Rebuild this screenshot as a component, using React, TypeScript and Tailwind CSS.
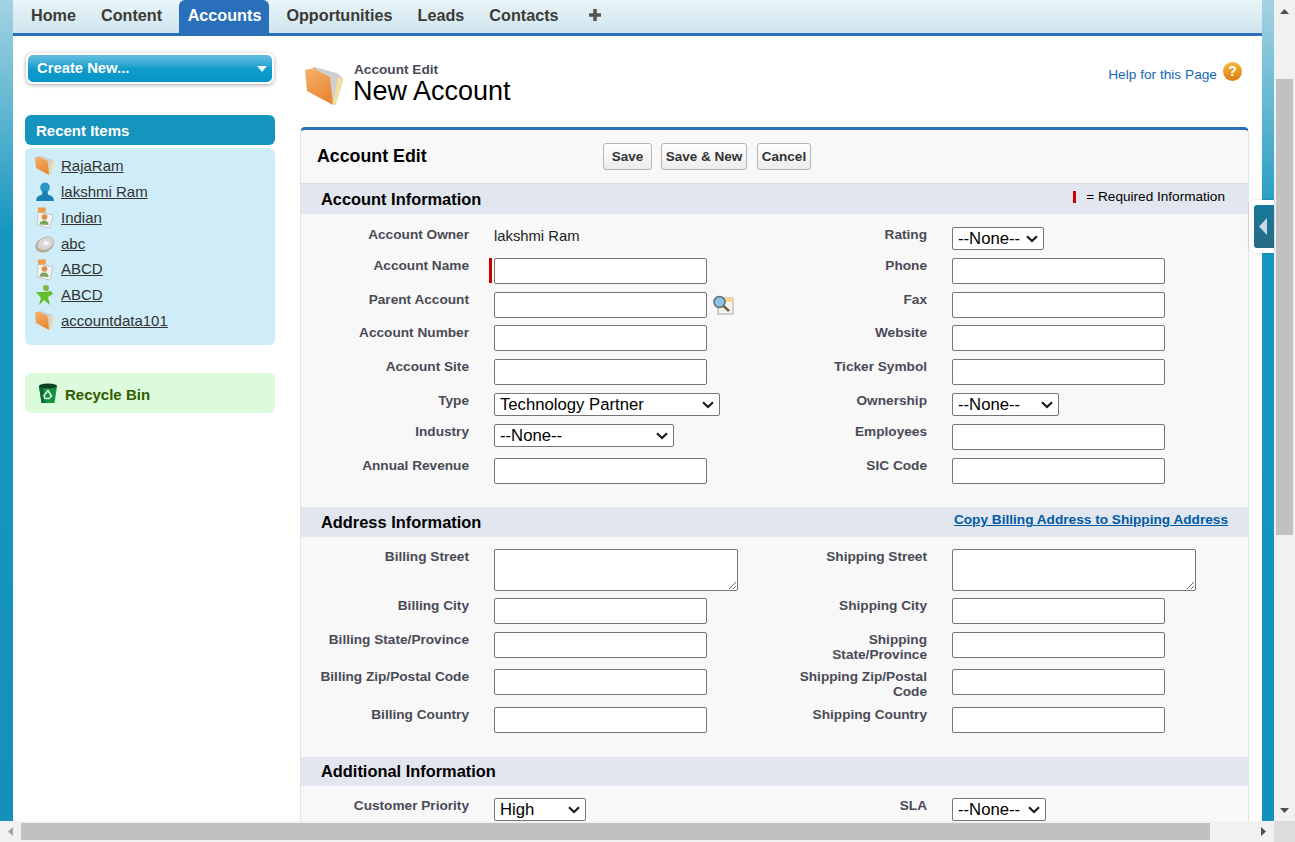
import { ReactNode } from 'react'

const tabs = ['Home', 'Content', 'Accounts', 'Opportunities', 'Leads', 'Contacts']

function FolderIcon({ className }: { className: string }) {
  return (
    <svg viewBox="0 0 40 40" className={className}>
      <defs>
        <linearGradient id="folderFront" x1="0" y1="0" x2="0.4" y2="1">
          <stop offset="0" stopColor="#f6b26a" />
          <stop offset="1" stopColor="#ea8737" />
        </linearGradient>
      </defs>
      <path d="M8 0 L33 7 L38 12 L30 38 Z" fill="#cfcfcf" stroke="#bdbdbd" strokeWidth="0.6" />
      <path d="M33 10 L38 12 L30 38 L28 37 Z" fill="#f6df95" />
      <path d="M0 3 L9 1 L13 4 L25 10 L28 38 L2 24 Z" fill="url(#folderFront)" />
    </svg>
  )
}

function PersonIcon() {
  return (
    <svg viewBox="0 0 20 20" className="h-5 w-5">
      <ellipse cx="10" cy="5.5" rx="4.8" ry="5" fill="#2a95c6" />
      <path d="M7.5 9 H12.5 L13 12.5 C17 13.5 19 15.5 19 19 H1 C1 15.5 3 13.5 7 12.5 Z" fill="#1d80b2" />
    </svg>
  )
}

function CardIcon() {
  return (
    <svg viewBox="0 0 20 22" className="h-[22px] w-5">
      <path d="M3 5 L18 8 L15 21 L2 18 Z" fill="#f3f3ef" stroke="#bcbcbc" strokeWidth="0.8" />
      <path d="M3 0.5 H11 L10.5 5.5 H3 Z" fill="#ef9a4c" />
      <circle cx="9.5" cy="10" r="2.8" fill="#e08d4d" />
      <path d="M4.5 17.5 C4.5 12 14 12 13.5 18 Z" fill="#78a65c" />
    </svg>
  )
}

function CoinIcon() {
  return (
    <svg viewBox="0 0 22 20" className="h-5 w-[21px]">
      <ellipse cx="10" cy="11" rx="10" ry="7.5" transform="rotate(-25 10 11)" fill="#b8a98f" />
      <ellipse cx="11" cy="9.5" rx="9" ry="6.5" transform="rotate(-25 11 9.5)" fill="#d6d6d6" stroke="#a4a4a4" strokeWidth="0.6" />
      <path d="M8 9 L12 5.5 L12 8 L16 8 L14.5 10.5 L10.5 11.5 Z" fill="#f3f3f3" />
    </svg>
  )
}

function StarFigureIcon() {
  return (
    <svg viewBox="0 0 20 21" className="h-[21px] w-5">
      <circle cx="11" cy="3" r="3" fill="#8bb23f" />
      <path d="M1 7 L10 7 L16 6 L18 9 L13 12 L15 20 L9 15 L4 20 L6 13 Z" fill="#5fc02a" />
    </svg>
  )
}

function TrashIcon() {
  return (
    <svg viewBox="0 0 20 21" className="h-[21px] w-5">
      <path d="M1 3 H19 L16.5 20 H3.5 Z" fill="#15923f" />
      <path d="M3.5 20 H7 L5 3 H1 Z" fill="#0c6a30" />
      <ellipse cx="10" cy="3" rx="9" ry="2.4" fill="#0d3f20" />
      <path d="M10 7.5 L13.5 13 L11 15.5 H7 L6 12.5 Z" fill="none" stroke="#d4ecd9" strokeWidth="1.7" />
    </svg>
  )
}

function LookupIcon() {
  return (
    <svg viewBox="0 0 22 21" className="h-[21px] w-[22px]">
      <rect x="6" y="3" width="15" height="16" fill="#f4f3ee" stroke="#a8a8a0" />
      <rect x="12" y="3" width="9" height="4" fill="#fcd98a" />
      <circle cx="7.5" cy="7" r="5.5" fill="#8fc3e4" stroke="#5a6f80" strokeWidth="1.5" />
      <path d="M11.5 11 L17 16" stroke="#7a5a3a" strokeWidth="2.4" />
    </svg>
  )
}

function Field() {
  return <input className="block h-[26px] w-[213px] rounded-[2px] border border-[#767676] bg-white" />
}

function Area() {
  return <textarea className="block h-[42px] w-[244px] rounded-[2px] border border-[#767676] bg-white" />
}

function Pick({ value, className }: { value: string; className: string }) {
  return (
    <div className={`relative ${className}`}>
      <select
        defaultValue={value}
        className="block h-[23px] w-full appearance-none rounded-[2px] border border-[#767676] bg-white pt-[1px] pl-[5px] text-[16.7px] leading-none text-black"
      >
        <option>{value}</option>
      </select>
      <svg viewBox="0 0 12 8" className="pointer-events-none absolute top-[8px] right-[6px] h-2 w-3">
        <path d="M1 1.2 L6 6 L11 1.2" fill="none" stroke="#1a1a1a" strokeWidth="2.2" />
      </svg>
    </div>
  )
}

function Row({ height, label, field, label2, field2 }: { height: string; label: string; field: ReactNode; label2: string; field2: ReactNode }) {
  return (
    <div className={`flex ${height}`}>
      <div className="mr-[25px] w-[168px] text-right text-[13.65px] leading-[15px] font-bold text-[#4a4a56]">{label}</div>
      <div className="w-[265px]">{field}</div>
      <div className="mr-[25px] w-[168px] pl-[35px] text-right text-[13.65px] leading-[15px] font-bold text-[#4a4a56]">{label2}</div>
      <div>{field2}</div>
    </div>
  )
}

function SectionHead({ title, children }: { title: string; children?: ReactNode }) {
  return (
    <div className="flex h-full items-center justify-between bg-[#e2e6ef] pr-5 pl-5">
      <h3 className="text-[16.4px] font-bold text-black">{title}</h3>
      {children}
    </div>
  )
}

function ActionButton({ children, className }: { children: ReactNode; className: string }) {
  return (
    <button className={`h-[27px] rounded-[3px] border border-[#b5b5b5] bg-gradient-to-b from-white to-[#ececec] pt-[1px] text-[13.5px] font-bold text-[#333] ${className}`}>
      {children}
    </button>
  )
}

function RecentItem({ icon, name }: { icon: ReactNode; name: string }) {
  return (
    <li className="flex h-[25.8px] items-center">
      <span className="flex w-[26px] shrink-0 justify-center">{icon}</span>
      <span className="ml-[3px] text-[15px] text-[#333] underline">{name}</span>
    </li>
  )
}

export default function App() {
  return (
    <div className="flex h-[842px] w-[1295px] flex-col overflow-hidden bg-white font-['Liberation_Sans',Arial,sans-serif]">
      <div className="relative flex h-[821px]">
        <div className="w-[13px] shrink-0 bg-[linear-gradient(180deg,#a4d3e2_0%,#1797c0_28%,#1491ba_100%)]" />

        <div className="w-[1249px] shrink-0 overflow-hidden">
          <nav className="flex h-[36px] items-end border-b-[3px] border-[#2a6fba] bg-gradient-to-b from-[#e9f4f8] to-[#cfe5ee] pl-[5.5px]">
            {tabs.map((tab) =>
              tab === 'Accounts' ? (
                <span key={tab} className="mr-[4.5px] ml-[4px] flex h-[33px] items-center rounded-t-[6px] bg-[#2a6fba] pr-[8px] pb-[2px] pl-[9px] text-[16.2px] font-bold text-white">
                  {tab}
                </span>
              ) : (
                <span key={tab} className="flex h-[33px] items-center px-[12.5px] pb-[2px] text-[16.2px] font-bold text-[#3b3a36]">
                  {tab}
                </span>
              ),
            )}
            <span className="flex h-[33px] items-center pb-[4px] pl-[17.5px]">
              <svg viewBox="0 0 12 12" className="h-3 w-3">
                <path d="M4.2 0 H7.8 V4.2 H12 V7.8 H7.8 V12 H4.2 V7.8 H0 V4.2 H4.2 Z" fill="#555" />
              </svg>
            </span>
          </nav>

          <div className="flex">
            <aside className="ml-[12px] w-[250px] shrink-0 pt-[17px]">
              <div className="mx-[1px] flex h-[31px] items-center justify-between rounded-[7px] border-2 border-white bg-gradient-to-b from-[#62c0e2] via-[#0f9ccb] to-[#0795c7] pr-[5px] pl-[9px] shadow-[0_1px_4px_rgba(0,0,0,0.35)]">
                <span className="text-[14.8px] font-bold text-white">Create New...</span>
                <svg viewBox="0 0 10 6" className="h-[6px] w-[10px]">
                  <path d="M0 0 H10 L5 6 Z" fill="#e6f4fa" />
                </svg>
              </div>

              <div className="mt-[31px] flex h-[30px] items-center rounded-[6px] bg-[#1594bd] pt-[2px] pl-[11px] text-[15px] font-bold text-white">Recent Items</div>
              <ul className="mt-[3px] h-[197px] rounded-[6px] bg-[#cfedf8] pt-[5.5px] pl-[7px]">
                <RecentItem icon={<FolderIcon className="h-5 w-5" />} name="RajaRam" />
                <RecentItem icon={<PersonIcon />} name="lakshmi Ram" />
                <RecentItem icon={<CardIcon />} name="Indian" />
                <RecentItem icon={<CoinIcon />} name="abc" />
                <RecentItem icon={<CardIcon />} name="ABCD" />
                <RecentItem icon={<StarFigureIcon />} name="ABCD" />
                <RecentItem icon={<FolderIcon className="h-5 w-5" />} name="accountdata101" />
              </ul>

              <div className="mt-[28px] flex h-[40px] items-center gap-[7px] rounded-[6px] bg-[#dcfadc] pt-[5px] pl-[13px]">
                <span className="-mt-[5px]">
                  <TrashIcon />
                </span>
                <span className="text-[15px] font-bold text-[#2f5d00]">Recycle Bin</span>
              </div>
            </aside>

            <main className="ml-[25px] w-[949px] shrink-0">
              <div className="flex h-[91px] justify-between">
                <div className="flex pt-[26px] pl-[5px]">
                  <FolderIcon className="mt-[5px] h-[40px] w-[40px]" />
                  <div className="ml-[8px]">
                    <div className="pl-[1px] text-[13.65px] leading-[15px] font-bold text-[#4a4a56]">Account Edit</div>
                    <h1 className="-mt-[1px] text-[27px] leading-[30px] text-black">New Account</h1>
                  </div>
                </div>
                <div className="flex items-start gap-[6px] pt-[26px] pr-[7px]">
                  <span className="pt-[3px] text-[13.7px] text-[#1468b4]">Help for this Page</span>
                  <span className="flex h-[19px] w-[19px] items-center justify-center rounded-full bg-gradient-to-b from-[#f6b73c] to-[#dc7d10] text-[14px] font-bold text-white">?</span>
                </div>
              </div>

              <section className="rounded-t-[5px] border-x border-t-[3px] border-x-[#e0e3e5] border-t-[#2a6fba] bg-[#f8f8f8]">
                <div className="flex h-[54px] items-center border-b border-[#dbdbdb] pl-[16px]">
                  <h2 className="w-[286px] text-[17.8px] font-bold text-black">Account Edit</h2>
                  <div className="flex gap-[9px]">
                    <ActionButton className="w-[49px]">Save</ActionButton>
                    <ActionButton className="w-[86px]">Save &amp; New</ActionButton>
                    <ActionButton className="ml-px w-[54px]">Cancel</ActionButton>
                  </div>
                </div>

                <div className="h-[30px]">
                  <SectionHead title="Account Information">
                    <span className="flex items-center pr-[3px] pb-[4px] text-[13.6px] text-black">
                      <span className="mr-[10px] h-3 w-[3px] bg-[#c00]" />= Required Information
                    </span>
                  </SectionHead>
                </div>
                <div className="h-[293px] pt-[13px]">
                  <Row
                    height="h-[31px]"
                    label="Account Owner"
                    field={<div className="pt-[1px] text-[14.8px] leading-[17px] text-[#222]">lakshmi Ram</div>}
                    label2="Rating"
                    field2={<Pick value="--None--" className="w-[92px]" />}
                  />
                  <Row
                    height="h-[34px]"
                    label="Account Name"
                    field={
                      <div className="relative">
                        <span className="absolute top-0 -left-[5px] h-[25px] w-[3px] bg-[#c00]" />
                        <Field />
                      </div>
                    }
                    label2="Phone"
                    field2={<Field />}
                  />
                  <Row
                    height="h-[33px]"
                    label="Parent Account"
                    field={
                      <div className="flex items-center gap-[5px]">
                        <Field />
                        <LookupIcon />
                      </div>
                    }
                    label2="Fax"
                    field2={<Field />}
                  />
                  <Row height="h-[34px]" label="Account Number" field={<Field />} label2="Website" field2={<Field />} />
                  <Row height="h-[34px]" label="Account Site" field={<Field />} label2="Ticker Symbol" field2={<Field />} />
                  <Row
                    height="h-[31px]"
                    label="Type"
                    field={<Pick value="Technology Partner" className="w-[226px]" />}
                    label2="Ownership"
                    field2={<Pick value="--None--" className="w-[107px]" />}
                  />
                  <Row height="h-[34px]" label="Industry" field={<Pick value="--None--" className="w-[180px]" />} label2="Employees" field2={<Field />} />
                  <Row height="h-[26px]" label="Annual Revenue" field={<Field />} label2="SIC Code" field2={<Field />} />
                </div>

                <div className="h-[30px]">
                  <SectionHead title="Address Information">
                    <span className="pb-[3px] text-[13.65px] font-bold text-[#015ba7] underline">Copy Billing Address to Shipping Address</span>
                  </SectionHead>
                </div>
                <div className="h-[220px] pt-[12px]">
                  <Row height="h-[49px]" label="Billing Street" field={<Area />} label2="Shipping Street" field2={<Area />} />
                  <Row height="h-[34px]" label="Billing City" field={<Field />} label2="Shipping City" field2={<Field />} />
                  <Row height="h-[37px]" label="Billing State/Province" field={<Field />} label2="Shipping State/Province" field2={<Field />} />
                  <Row height="h-[38px]" label="Billing Zip/Postal Code" field={<Field />} label2="Shipping Zip/Postal Code" field2={<Field />} />
                  <Row height="h-[26px]" label="Billing Country" field={<Field />} label2="Shipping Country" field2={<Field />} />
                </div>

                <div className="h-[29px]">
                  <SectionHead title="Additional Information" />
                </div>
                <div className="pt-[12px]">
                  <Row
                    height="h-[40px]"
                    label="Customer Priority"
                    field={<Pick value="High" className="w-[92px]" />}
                    label2="SLA"
                    field2={<Pick value="--None--" className="w-[94px]" />}
                  />
                </div>
              </section>
            </main>
          </div>
        </div>

        <div className="w-[12px] shrink-0 bg-[linear-gradient(180deg,#a4d3e2_0%,#1797c0_28%,#1491ba_100%)]" />

        <div className="flex w-[21px] shrink-0 flex-col items-center justify-between bg-[#f1f1f1] pt-[9px] pb-[8px]">
          <div className="flex w-[17px] flex-col items-center">
            <svg viewBox="0 0 9 5" className="h-[5px] w-[9px]">
              <path d="M0 5 L4.5 0 L9 5 Z" fill="#505050" />
            </svg>
            <div className="mt-[65px] h-[456px] w-[17px] bg-[#c1c1c1]" />
          </div>
          <svg viewBox="0 0 9 5" className="h-[5px] w-[9px]">
            <path d="M0 0 L4.5 5 L9 0 Z" fill="#505050" />
          </svg>
        </div>

        <div className="absolute top-[200px] left-[1249px] h-[53px] w-[25px] rounded-l-[7px] border-y-[5px] border-l-[5px] border-white shadow-[0_0_2px_rgba(0,0,0,0.3)]">
          <div className="flex h-full items-center rounded-l-[3px] bg-gradient-to-b from-[#18799b] to-[#256a85] pl-[5px]">
            <svg viewBox="0 0 8 17" className="h-[17px] w-2">
              <path d="M8 0 V17 L0 8.5 Z" fill="#c7dbe4" />
            </svg>
          </div>
        </div>
      </div>

      <div className="flex h-[21px] items-center bg-[#f1f1f1]">
        <div className="flex w-[21px] items-center justify-end pr-[8px]">
          <svg viewBox="0 0 5 9" className="h-[9px] w-[5px]">
            <path d="M5 0 V9 L0 4.5 Z" fill="#a3a3a3" />
          </svg>
        </div>
        <div className="h-[17px] w-[1189px] bg-[#c1c1c1]" />
        <div className="flex w-[56px] items-center justify-end">
          <svg viewBox="0 0 5 9" className="h-[9px] w-[5px]">
            <path d="M0 0 V9 L5 4.5 Z" fill="#505050" />
          </svg>
        </div>
        <div className="ml-auto h-[21px] w-[21px] bg-[#dcdcdc]" />
      </div>
    </div>
  )
}
